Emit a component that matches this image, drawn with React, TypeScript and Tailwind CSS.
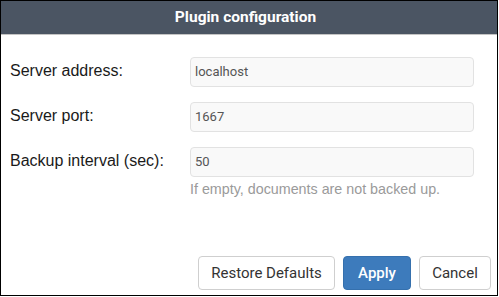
import React from "react";

const rows = [
  { label: "Server address:", value: "localhost" },
  { label: "Server port:", value: "1667" },
  { label: "Backup interval (sec):", value: "50" },
];

export default function App() {
  return (
    <div className="w-[499px] h-[297px] bg-white">
      <div className="w-[498px] h-[296px] border border-black flex flex-col bg-white">
        <div className="h-[33px] bg-[#4b5563] flex items-center justify-center pr-[7px] border-b border-[#c4c4c4] box-content">
          <span className="text-white text-[15.5px] font-bold font-['Roboto',sans-serif] leading-none">
            Plugin configuration
          </span>
        </div>
        <div className="flex flex-col pt-[22px] gap-[15px] pl-[9px]">
          {rows.map((r, i) => (
            <div key={i} className="flex items-center h-[30px]">
              <div className="w-[180px] text-[16px] text-[#1a1a1a] font-['Liberation_Sans',Arial,sans-serif] -mt-[3px]">
                {r.label}
              </div>
              <div className="w-[284px] h-[30px] bg-[#f9f9f9] border border-[#e2e2e2] rounded-[4px] flex items-center pl-[4px] text-[13px] text-[#555] font-['Roboto',sans-serif]">
                {r.value}
              </div>
            </div>
          ))}
        </div>
        <div className="pl-[189px] mt-[4px] text-[14.3px] leading-[16px] text-[#9a9a9a] font-['Liberation_Sans',Arial,sans-serif]">
          If empty, documents are not backed up.
        </div>
        <div className="mt-auto flex justify-end gap-2 pr-[6px] pb-[5px]">
          <button className="w-[137px] h-[34px] border border-[#cfcfcf] rounded-[4px] bg-white text-[15px] text-[#333] font-['Roboto',sans-serif]">
            Restore Defaults
          </button>
          <button className="w-[68px] h-[34px] border border-[#3570ad] rounded-[4px] bg-[#3d7bbc] text-[15px] text-white font-medium font-['Roboto',sans-serif]">
            Apply
          </button>
          <button className="w-[72px] h-[34px] border border-[#cfcfcf] rounded-[4px] bg-white text-[15px] text-[#333] font-['Roboto',sans-serif]">
            Cancel
          </button>
        </div>
      </div>
    </div>
  );
}
